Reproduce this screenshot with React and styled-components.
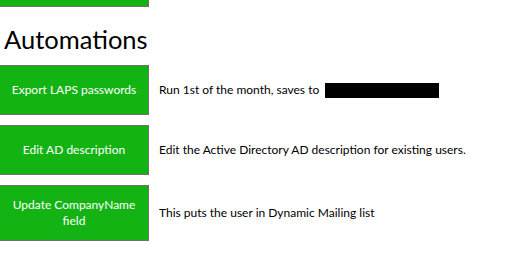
import React from "react";
import styled, { createGlobalStyle } from "styled-components";

const GlobalStyle = createGlobalStyle`
  html, body {
    margin: 0;
    padding: 0;
    background: #ffffff;
  }
  body {
    font-family: "Lato", "Noto Sans", sans-serif;
    color: #000000;
  }
`;

const automations = [
  {
    label: "Export LAPS passwords",
    text: "Run 1st of the month, saves to",
    redacted: true,
  },
  {
    label: "Edit AD description",
    text: "Edit the Active Directory AD description for existing users.",
  },
  {
    label: "Update CompanyName field",
    text: "This puts the user in Dynamic Mailing list",
  },
];

const App = () => {
  return (
    <>
      <GlobalStyle />
      <Page>
        <StubButton />
        <Heading>Automations</Heading>
        <List>
          {automations.map((item) => (
            <Row key={item.label}>
              <ActionButton>{item.label}</ActionButton>
              <Description>
                {item.text}
                {item.redacted && <Redacted />}
              </Description>
            </Row>
          ))}
        </List>
      </Page>
    </>
  );
};

const Page = styled.div`
  display: flex;
  flex-direction: column;
  width: 515px;
  height: 254px;
  overflow: hidden;
`;

const buttonLook = `
  box-sizing: border-box;
  width: 149px;
  background-color: #14b314;
  border: 1px solid #707070;
  border-left: none;
`;

const StubButton = styled.div`
  ${buttonLook}
  height: 7px;
  border-top: none;
`;

const Heading = styled.h1`
  margin: 0;
  padding: 16px 0 0 4px;
  height: 42px;
  box-sizing: border-box;
  font-family: "Lato", "Noto Sans", sans-serif;
  font-weight: 400;
  font-size: 25.5px;
  line-height: 32px;
  color: #000000;
`;

const List = styled.div`
  display: flex;
  flex-direction: column;
  gap: 10px;
  margin-top: 16px;
`;

const Row = styled.div`
  display: flex;
  align-items: center;
  gap: 10px;
`;

const ActionButton = styled.button`
  ${buttonLook}
  min-height: 50px;
  padding: 11px 8px;
  font-family: "Lato", "Noto Sans", sans-serif;
  font-size: 12px;
  line-height: 16px;
  color: #ffffff;
  text-align: center;
  cursor: pointer;
`;

const Description = styled.div`
  display: flex;
  align-items: center;
  gap: 6px;
  font-size: 12px;
  line-height: 16px;
  color: #000000;
`;

const Redacted = styled.span`
  display: inline-block;
  width: 114px;
  height: 15px;
  background: #000000;
`;

export default App;
